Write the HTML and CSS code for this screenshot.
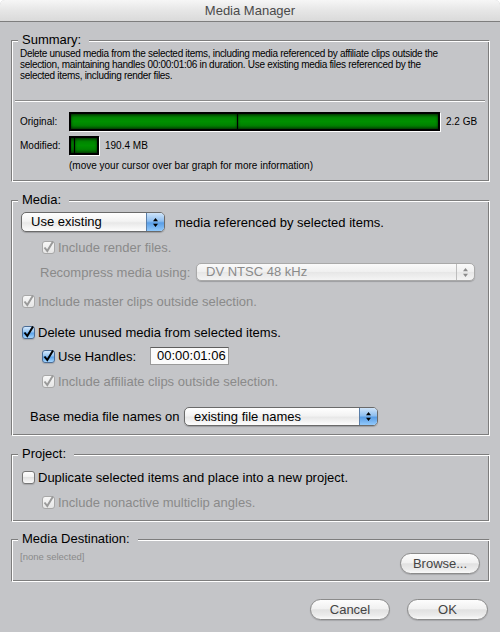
FILE: index.html
```html
<!DOCTYPE html>
<html lang="en">
<head>
    <meta charset="UTF-8">
    <title>Media Manager</title>
    <link rel="stylesheet" href="styles.css">
</head>
<body>
<div class="window">
    <div class="titlebar">Media Manager</div>
    <div class="content">

        <section class="group">
            <div class="group-head"><span class="group-title">Summary:</span></div>
            <div class="group-body summary-body">
                <p class="summary-text">Delete unused media from the selected items, including media referenced by affiliate clips outside the<br>selection, maintaining handles 00:00:01:06 in duration. Use existing media files referenced by the<br>selected items, including render files.</p>
                <hr class="sep">
                <div class="bar-row">
                    <span class="bar-label">Original:</span>
                    <div class="bar" style="width: 371px"><span class="seg" style="flex: 0 0 166px"></span><span class="seg"></span></div>
                    <span class="bar-value">2.2 GB</span>
                </div>
                <div class="bar-row">
                    <span class="bar-label">Modified:</span>
                    <div class="bar" style="width: 30px"><span class="seg" style="flex: 0 0 3px"></span><span class="seg"></span></div>
                    <span class="bar-value">190.4 MB</span>
                </div>
                <p class="bar-hint">(move your cursor over bar graph for more information)</p>
            </div>
        </section>

        <section class="group">
            <div class="group-head"><span class="group-title">Media:</span></div>
            <div class="group-body media-body">
                <div class="row row-use">
                    <div class="popup popup-use">
                        <span class="popup-text">Use existing</span>
                        <span class="popup-arrows"><svg width="5" height="9" viewBox="0 0 5 9"><path d="M2.5 0L5 3.2H0z M2.5 9L0 5.8H5z"/></svg></span>
                    </div>
                    <span class="after-popup">media referenced by selected items.</span>
                </div>
                <div class="row row-render indent disabled">
                    <span class="cb checked"><svg width="13" height="13" viewBox="0 0 13 13"><path d="M2.5 6.5L5.3 10L11 0.5"/></svg></span>
                    <span>Include render files.</span>
                </div>
                <div class="row row-recompress disabled">
                    <span class="recompress-label">Recompress media using:</span>
                    <div class="popup popup-off popup-dv">
                        <span class="popup-text">DV NTSC 48 kHz</span>
                        <span class="popup-arrows"><svg width="5" height="9" viewBox="0 0 5 9"><path d="M2.5 0L5 3.2H0z M2.5 9L0 5.8H5z"/></svg></span>
                    </div>
                </div>
                <div class="row row-master disabled">
                    <span class="cb checked"><svg width="13" height="13" viewBox="0 0 13 13"><path d="M2.5 6.5L5.3 10L11 0.5"/></svg></span>
                    <span>Include master clips outside selection.</span>
                </div>
                <div class="row row-delete">
                    <span class="cb checked"><svg width="13" height="13" viewBox="0 0 13 13"><path d="M2.5 6.5L5.3 10L11 0.5"/></svg></span>
                    <span>Delete unused media from selected items.</span>
                </div>
                <div class="row row-handles indent">
                    <span class="cb checked"><svg width="13" height="13" viewBox="0 0 13 13"><path d="M2.5 6.5L5.3 10L11 0.5"/></svg></span>
                    <span class="handles-label">Use Handles:</span>
                    <span class="tc-field">00:00:01:06</span>
                </div>
                <div class="row row-affiliate indent disabled">
                    <span class="cb checked"><svg width="13" height="13" viewBox="0 0 13 13"><path d="M2.5 6.5L5.3 10L11 0.5"/></svg></span>
                    <span>Include affiliate clips outside selection.</span>
                </div>
                <div class="row row-base">
                    <span class="base-label">Base media file names on</span>
                    <div class="popup popup-names">
                        <span class="popup-text">existing file names</span>
                        <span class="popup-arrows"><svg width="5" height="9" viewBox="0 0 5 9"><path d="M2.5 0L5 3.2H0z M2.5 9L0 5.8H5z"/></svg></span>
                    </div>
                </div>
            </div>
        </section>

        <section class="group">
            <div class="group-head"><span class="group-title">Project:</span></div>
            <div class="group-body project-body">
                <div class="row">
                    <span class="cb"></span>
                    <span>Duplicate selected items and place into a new project.</span>
                </div>
                <div class="row row-nonactive indent disabled">
                    <span class="cb checked"><svg width="13" height="13" viewBox="0 0 13 13"><path d="M2.5 6.5L5.3 10L11 0.5"/></svg></span>
                    <span>Include nonactive multiclip angles.</span>
                </div>
            </div>
        </section>

        <section class="group group-dest">
            <div class="group-head"><span class="group-title">Media Destination:</span></div>
            <div class="group-body dest-body">
                <span class="dest-path">[none selected]</span>
                <button class="btn btn-browse">Browse...</button>
            </div>
        </section>

        <div class="footer">
            <button class="btn btn-cancel">Cancel</button>
            <button class="btn btn-ok">OK</button>
        </div>
    </div>
</div>
</body>
</html>
```

FILE: styles.css
```css
html {
    background: #fff;
}
body {
    margin: 0;
    font-family: "Liberation Sans", Arial, sans-serif;
    font-size: 13px;
    color: #000;
}
.window {
    width: 500px;
    height: 632px;
    background: #c4c5c8;
    border-radius: 5px 5px 0 0;
    overflow: hidden;
}
.titlebar {
    height: 21px;
    line-height: 21px;
    border-bottom: 1px solid #7e7e7e;
    background: linear-gradient(#f6f6f6, #e6e6e6 50%, #dadada);
    text-align: center;
    color: #4a4a4a;
}
.content {
    padding: 11px 10px 0 11px;
}

/* group boxes */
.group + .group {
    margin-top: 11px;
}
.group-dest {
    margin-top: 10px !important;
}
.group-head {
    display: flex;
    height: 14px;
    line-height: 14px;
}
.group-head::before {
    content: "";
    width: 6px;
    margin-top: 7px;
    border-top: 1px solid #7d7d7d;
    border-left: 1px solid #7d7d7d;
    box-shadow: inset 1px 1px 0 #fff;
}
.group-head::after {
    content: "";
    flex: 1;
    margin-top: 7px;
    border-top: 1px solid #7d7d7d;
    border-right: 1px solid #fff;
    box-shadow: inset 0 1px 0 #fff, inset -1px 0 0 #7d7d7d;
}
.group-title {
    padding: 0 8px 0 4px;
}
.group-body {
    border-left: 1px solid #7d7d7d;
    border-right: 1px solid #fff;
    border-bottom: 1px solid #fff;
    box-shadow: inset 1px 0 0 #fff, inset -1px -1px 0 #7d7d7d;
}

/* summary */
.summary-body {
    padding: 1px 8px 9px 8px;
}
.summary-text {
    margin: 0;
    font-size: 10px;
    line-height: 11px;
    letter-spacing: -0.3px;
}
.sep {
    height: 0;
    margin: 19px -4px 10px -5px;
    border: 0;
    border-top: 1px solid #8a8a8a;
    border-bottom: 1px solid #fff;
}
.bar-row {
    display: flex;
    align-items: center;
    height: 19px;
    font-size: 10px;
}
.bar-row + .bar-row {
    margin-top: 5px;
}
.bar-label {
    width: 49px;
}
.bar {
    display: flex;
    height: 19px;
    box-sizing: border-box;
    border: 2px solid #000;
    box-shadow: 1px 1px 0 #fff;
}
.seg {
    flex: 1;
    background: linear-gradient(#034a03, #008600 25%, #009000 50%, #008300 75%, #054c05);
    box-shadow: inset 1px 0 2px rgba(0, 0, 0, 0.3), inset -1px 0 2px rgba(0, 0, 0, 0.3);
}
.seg + .seg {
    border-left: 1px solid #000;
}
.bar-value {
    margin-left: 6px;
}
.bar-hint {
    margin: 5px 0 0 49px;
    font-size: 10px;
    line-height: 12px;
}

/* rows */
.row {
    display: flex;
    align-items: center;
    height: 18px;
    white-space: nowrap;
}
.indent {
    padding-left: 20px;
}
.disabled {
    color: #8a8a8a;
}
.media-body {
    padding: 5px 9px 9px 10px;
}
.row-use {
    height: 20px;
}
.row-render { margin-top: 6px; }
.row-recompress { margin-top: 7px; padding-left: 18px; }
.row-master { margin-top: 11px; }
.row-delete { margin-top: 13px; }
.row-handles { margin-top: 6px; }
.row-affiliate { margin-top: 7px; }
.row-base {
    margin-top: 17px;
    height: 19px;
    padding-left: 8px;
}
.recompress-label {
    width: 156px;
}
.base-label {
    width: 154px;
}
.handles-label {
    width: 92px;
}
.after-popup {
    margin-left: 10px;
}

/* checkboxes */
.cb {
    width: 13px;
    height: 13px;
    box-sizing: border-box;
    margin-right: 3px;
    border: 1px solid #777;
    border-radius: 3px;
    background: linear-gradient(#fefefe, #f0f0f0 50%, #e2e2e2 50%, #fafafa);
    box-shadow: 0 1px 1px rgba(0, 0, 0, 0.15);
    flex: none;
}
.cb svg {
    display: block;
    margin: -1px;
    overflow: visible;
}
.cb path {
    fill: none;
    stroke: #000;
    stroke-width: 2;
}
.cb.checked {
    border-color: #4b6c95;
    background: linear-gradient(#d4e8fc, #93c4f2 45%, #5aa2ea 55%, #a5d6ff);
}
.disabled .cb {
    border-color: #a8a8a8;
    background: linear-gradient(#f7f7f7, #e6e6e6);
    box-shadow: none;
}
.disabled .cb path {
    stroke: #9a9a9a;
}

/* popups */
.popup {
    display: flex;
    height: 20px;
    box-sizing: border-box;
    border: 1px solid #6a6a6a;
    border-radius: 5px;
    background: linear-gradient(#fff, #f3f3f3 45%, #e8e8e8 55%, #fdfdfd);
    box-shadow: 0 1px 1px rgba(0, 0, 0, 0.2);
    overflow: hidden;
    color: #000;
}
.popup-text {
    flex: 1;
    padding-left: 9px;
    line-height: 18px;
}
.popup-arrows {
    width: 17px;
    display: flex;
    align-items: center;
    justify-content: center;
    border-left: 1px solid #5a7ea8;
    background: linear-gradient(#cfe4f9, #8fbff0 45%, #5a9ee6 55%, #92c9fb);
}
.popup-use {
    width: 144px;
    margin-left: -1px;
}
.popup-names {
    width: 194px;
    height: 19px;
}
.popup-names .popup-text {
    line-height: 17px;
}
.popup-dv {
    width: 279px;
    height: 18px;
}
.popup-off {
    border-color: #a9a9a9;
    background: linear-gradient(#fafafa, #efefef 50%, #e6e6e6 50%, #f4f4f4);
    color: #8a8a8a;
}
.popup-off .popup-text {
    line-height: 16px;
}
.popup-off .popup-arrows {
    border-left-color: #bdbdbd;
    background: none;
    fill: #8a8a8a;
}

.tc-field {
    width: 79px;
    height: 18px;
    box-sizing: border-box;
    padding-left: 6px;
    line-height: 16px;
    border: 1px solid #9a9a9a;
    border-top-color: #5e5e5e;
    background: #fbfbfb;
}

/* project */
.project-body {
    padding: 7px 9px 10px 10px;
}
.row-nonactive {
    margin-top: 7px;
}

/* destination */
.dest-body {
    display: flex;
    justify-content: space-between;
    align-items: flex-start;
    padding: 0 9px 7px 8px;
}
.dest-path {
    margin-top: 5px;
    font-size: 9.5px;
    line-height: 11px;
    color: #8a8a8a;
}

/* buttons */
.btn {
    height: 21px;
    box-sizing: border-box;
    padding: 0;
    border: 1px solid #8b8b8b;
    border-radius: 11px;
    background: linear-gradient(#fdfdfd, #f1f1f1 45%, #e1e1e1 52%, #ebebeb 80%, #fafafa);
    box-shadow: 0 1px 1px rgba(0, 0, 0, 0.15);
    font-family: inherit;
    font-size: 13px;
    color: #444;
}
.btn-browse {
    width: 80px;
    margin-top: 7px;
}
.footer {
    display: flex;
    justify-content: flex-end;
    gap: 17px;
    margin: 17px 2px 0 0;
}
.btn-cancel {
    width: 80px;
}
.btn-ok {
    width: 81px;
}
```
